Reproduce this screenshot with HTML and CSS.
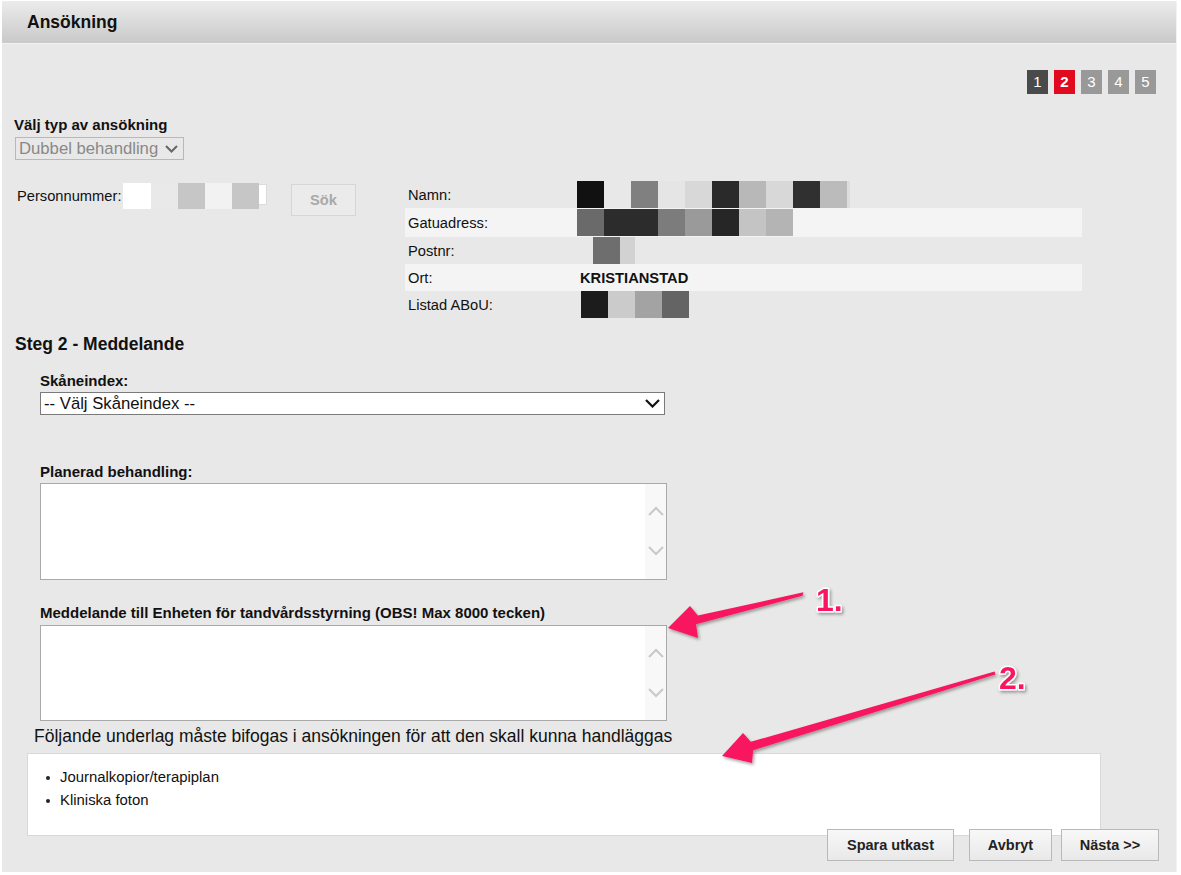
FILE: index.html
```html
<!DOCTYPE html>
<html lang="sv">
<head>
<meta charset="utf-8">
<title>Ansökning</title>
<link rel="stylesheet" href="styles.css">
</head>
<body>
<div class="panel">
  <div class="header"><h1 class="title">Ansökning</h1></div>
  <div class="content">
    <div class="steps">
      <span class="step done">1</span>
      <span class="step active">2</span>
      <span class="step">3</span>
      <span class="step">4</span>
      <span class="step">5</span>
    </div>

    <div class="type-block">
      <div class="blabel">Välj typ av ansökning</div>
      <div class="select small">
        <span>Dubbel behandling</span>
        <svg class="chev" width="13" height="8" viewBox="0 0 13 8"><path d="M1 1 L6.5 6.5 L12 1" fill="none" stroke="#666" stroke-width="2"/></svg>
      </div>
    </div>

    <div class="person">
      <div class="pn">
        <span class="pn-label">Personnummer:</span>
        <span class="mosaic pn-input">
          <i class="w"></i><i class="e9"></i><i class="c6"></i><i class="f2"></i><i class="c6"></i><i class="tail"></i>
        </span>
        <button class="btn-search">Sök</button>
      </div>
      <div class="info">
        <div class="row">
          <span class="ilabel">Namn:</span>
          <span class="mosaic"><i class="c11"></i><i class="cbg"></i><i class="c80"></i><i class="ce5"></i><i class="cd8"></i><i class="c2a"></i><i class="cb8"></i><i class="cd8"></i><i class="c30"></i><i class="cbb"></i><i class="sliver"></i></span>
        </div>
        <div class="row alt tall">
          <span class="ilabel">Gatuadress:</span>
          <span class="mosaic"><i class="c6a"></i><i class="c2c"></i><i class="c2c"></i><i class="c7c"></i><i class="c9a"></i><i class="c26"></i><i class="cc4"></i><i class="cb4"></i></span>
        </div>
        <div class="row">
          <span class="ilabel">Postnr:</span>
          <span class="mosaic off16"><i class="c6e"></i><i class="half cd2"></i></span>
        </div>
        <div class="row alt">
          <span class="ilabel">Ort:</span>
          <span class="ival">KRISTIANSTAD</span>
        </div>
        <div class="row">
          <span class="ilabel">Listad ABoU:</span>
          <span class="mosaic off4"><i class="c1c"></i><i class="ccb"></i><i class="ca3"></i><i class="c64"></i></span>
        </div>
      </div>
    </div>

    <h2 class="section">Steg 2 - Meddelande</h2>

    <div class="fields">
      <div class="blabel f-skane">Skåneindex:</div>
      <div class="select wide">
        <span>-- Välj Skåneindex --</span>
        <svg class="chev" width="15" height="9" viewBox="0 0 15 9"><path d="M1 1 L7.5 7.5 L14 1" fill="none" stroke="#111" stroke-width="2.2"/></svg>
      </div>

      <div class="blabel f-plan">Planerad behandling:</div>
      <div class="textarea">
        <div class="ta-body"></div>
        <div class="ta-scroll">
          <svg width="16" height="10" viewBox="0 0 16 10"><path d="M1 9 L8 2 L15 9" fill="none" stroke="#c9c9c9" stroke-width="2"/></svg>
          <svg width="16" height="10" viewBox="0 0 16 10"><path d="M1 1 L8 8 L15 1" fill="none" stroke="#c9c9c9" stroke-width="2"/></svg>
        </div>
      </div>

      <div class="blabel f-msg">Meddelande till Enheten för tandvårdsstyrning (OBS! Max 8000 tecken)</div>
      <div class="textarea msg">
        <div class="ta-body"></div>
        <div class="ta-scroll">
          <svg width="16" height="10" viewBox="0 0 16 10"><path d="M1 9 L8 2 L15 9" fill="none" stroke="#c9c9c9" stroke-width="2"/></svg>
          <svg width="16" height="10" viewBox="0 0 16 10"><path d="M1 1 L8 8 L15 1" fill="none" stroke="#c9c9c9" stroke-width="2"/></svg>
        </div>
      </div>
    </div>

    <p class="notice">Följande underlag måste bifogas i ansökningen för att den skall kunna handläggas</p>
    <div class="reqbox">
      <ul>
        <li>Journalkopior/terapiplan</li>
        <li>Kliniska foton</li>
      </ul>
    </div>

    <div class="actions">
      <button class="btn btn-save">Spara utkast</button>
      <button class="btn btn-cancel">Avbryt</button>
      <button class="btn btn-next">Nästa &gt;&gt;</button>
    </div>
  </div>
</div>

<svg class="annot" width="1181" height="875" viewBox="0 0 1181 875">
  <defs>
    <filter id="sh" x="-20%" y="-20%" width="140%" height="140%">
      <feDropShadow dx="1.5" dy="2" stdDeviation="1.5" flood-color="#000" flood-opacity="0.35"/>
    </filter>
  </defs>
  <g filter="url(#sh)" fill="#f7195f">
    <polygon points="803.4,592.3 697.9,615.6 690,606 668,628 698,638 696.1,624.2 802.6,595.7"/>
    <polygon points="994.6,671.4 750.8,741.8 743,733 722,756 752,763 753.2,750.2 995.4,674.6"/>
  </g>
  <g class="num" filter="url(#sh)">
    <text x="816" y="611">1.</text>
    <text x="999" y="689">2.</text>
  </g>
</svg>
</body>
</html>
```

FILE: styles.css
```css
* { box-sizing: border-box; }

html, body {
  margin: 0;
  padding: 0;
  background: #ffffff;
}

body {
  font-family: "Liberation Sans", Arial, sans-serif;
  color: #111;
  font-size: 14.7px;
  position: relative;
  width: 1181px;
  height: 875px;
  overflow: hidden;
}

.panel {
  margin: 1px 0 0 2px;
  width: 1175px;
  height: 871px;
  background: #e8e8e8;
  border-right: 1px solid #f2f2f2;
}

.header {
  height: 43px;
  background: linear-gradient(#ececec, #c9c9c9);
  border-bottom: 1px solid #f3f3f3;
  padding-left: 25px;
  display: flex;
  align-items: center;
}

.title {
  margin: 0;
  font-size: 17.5px;
  font-weight: bold;
  color: #111;
  line-height: 20px;
}

.content {
  display: flex;
  flex-direction: column;
}

/* steps */
.steps {
  display: flex;
  justify-content: flex-end;
  gap: 6px;
  margin-top: 26px;
  padding-right: 20px;
}

.step {
  width: 21px;
  height: 24px;
  line-height: 24px;
  text-align: center;
  color: #fff;
  font-size: 15px;
  background: #999999;
}

.step.done { background: #4a4a4a; }
.step.active { background: #e10b20; font-weight: bold; }

/* type */
.type-block {
  margin-top: 23px;
  padding-left: 12px;
}

.blabel {
  font-weight: bold;
  font-size: 15px;
  line-height: 16px;
  color: #111;
}

.select {
  display: flex;
  align-items: center;
  justify-content: space-between;
  height: 23px;
  border: 1px solid #b8b8b8;
}

.select.small {
  margin-top: 4px;
  margin-left: 1px;
  width: 169px;
  padding: 0 5px 0 3px;
  color: #888;
  font-size: 16.7px;
}

.select.wide {
  margin-top: 3px;
  width: 625px;
  background: #fff;
  border-color: #7a7a7a;
  padding: 0 4px 0 3px;
  color: #111;
  font-size: 16.7px;
}

/* person */
.person {
  margin-top: 21px;
  display: flex;
  align-items: flex-start;
}

.pn {
  width: 403px;
  padding-left: 15px;
  padding-top: 2px;
  display: flex;
  align-items: flex-start;
}

.pn-label {
  line-height: 26px;
  width: 106px;
}

.mosaic {
  display: flex;
  height: 27px;
}

.mosaic i {
  display: block;
  width: 27px;
  height: 100%;
}

.pn-input { height: 26px; }
.pn-input .w { width: 28px; background: #ffffff; }
.pn-input .e9 { background: #e9e9e9; }
.pn-input .c6 { background: #c6c6c6; }
.pn-input .f2 { background: #f2f2f2; }
.pn-input .tail {
  width: 8px;
  height: 21px;
  margin-top: 1px;
  background: #fff;
  border: 1px solid #dcdcdc;
  border-left: 0;
}

.btn-search {
  margin-left: 24px;
  margin-top: 1px;
  width: 65px;
  height: 32px;
  background: #ebebeb;
  border: 1px solid #d6d6d6;
  color: #a9a9a9;
  font-family: inherit;
  font-weight: bold;
  font-size: 14.7px;
  padding: 0;
}

.info {
  width: 677px;
  display: flex;
  flex-direction: column;
}

.row {
  height: 27px;
  display: flex;
  align-items: center;
}

.row.tall { height: 29px; }
.row.alt { background: #f4f4f4; }

.ilabel {
  width: 172px;
  padding-left: 3px;
  color: #111;
}

.ival {
  font-weight: bold;
  padding-left: 3px;
}

.off16 { margin-left: 16px; }
.off4 { margin-left: 4px; }

.mosaic .sliver { width: 3px; background: #dddddd; }
.mosaic .half { width: 15px; }

.c11 { background: #111111; }
.cbg { background: #e8e8e8; }
.c80 { background: #808080; }
.ce5 { background: #e5e5e5; }
.cd8 { background: #d8d8d8; }
.c2a { background: #2a2a2a; }
.cb8 { background: #b8b8b8; }
.c30 { background: #303030; }
.cbb { background: #bbbbbb; }
.c6a { background: #6a6a6a; }
.c2c { background: #2c2c2c; }
.c7c { background: #7c7c7c; }
.c9a { background: #9a9a9a; }
.c26 { background: #262626; }
.cc4 { background: #c4c4c4; }
.cb4 { background: #b4b4b4; }
.c6e { background: #6e6e6e; }
.cd2 { background: #d2d2d2; }
.c1c { background: #1c1c1c; }
.ccb { background: #cbcbcb; }
.ca3 { background: #a3a3a3; }
.c64 { background: #646464; }

/* section */
.section {
  margin: 16px 0 0 13px;
  font-size: 17.5px;
  line-height: 20px;
  font-weight: bold;
  color: #111;
}

.fields {
  padding-left: 38px;
  display: flex;
  flex-direction: column;
}

.f-skane { margin-top: 19px; }
.f-plan { margin-top: 49px; }
.f-msg { margin-top: 25px; }

.textarea {
  margin-top: 3px;
  width: 627px;
  height: 97px;
  background: #fff;
  border: 1px solid #a9a9a9;
  display: flex;
}

.textarea.msg {
  margin-top: 4px;
  height: 96px;
}

.ta-body { flex: 1; }

.ta-scroll {
  width: 21px;
  background: #f8f8f8;
  display: flex;
  flex-direction: column;
  align-items: center;
  padding-top: 22px;
  gap: 30px;
}

.ta-scroll svg { display: block; }

.notice {
  margin: 5px 0 0 32px;
  font-size: 17.5px;
  line-height: 20px;
  color: #111;
}

.reqbox {
  margin: 7px 0 0 25px;
  width: 1074px;
  height: 83px;
  background: #fff;
  border: 1px solid #d8d8d8;
}

.reqbox ul {
  margin: 0;
  padding: 12px 0 0 32px;
  list-style: none;
}

.reqbox li {
  line-height: 23px;
  position: relative;
  font-size: 14.9px;
}

.reqbox li::before {
  content: "";
  position: absolute;
  left: -14px;
  top: 10px;
  width: 4px;
  height: 4px;
  border-radius: 50%;
  background: #222;
}

.actions {
  margin-top: -7px;
  display: flex;
  justify-content: flex-end;
  padding-right: 17px;
  position: relative;
}

.btn {
  height: 32px;
  background: linear-gradient(#f8f8f8, #e9e9e9);
  border: 1px solid #b9b9b9;
  font-family: inherit;
  font-size: 14.5px;
  font-weight: bold;
  color: #222;
  padding: 0;
}

.btn-save { width: 127px; }
.btn-cancel { width: 83px; margin-left: 15px; }
.btn-next { width: 98px; margin-left: 9px; }

/* annotations overlay */
.annot {
  position: absolute;
  left: 0;
  top: 0;
  pointer-events: none;
}

.num text {
  font-family: "Liberation Sans", Arial, sans-serif;
  font-weight: bold;
  font-size: 32px;
  fill: #f7195f;
  stroke: #ffffff;
  stroke-width: 3px;
  paint-order: stroke;
  stroke-linejoin: round;
}
```
